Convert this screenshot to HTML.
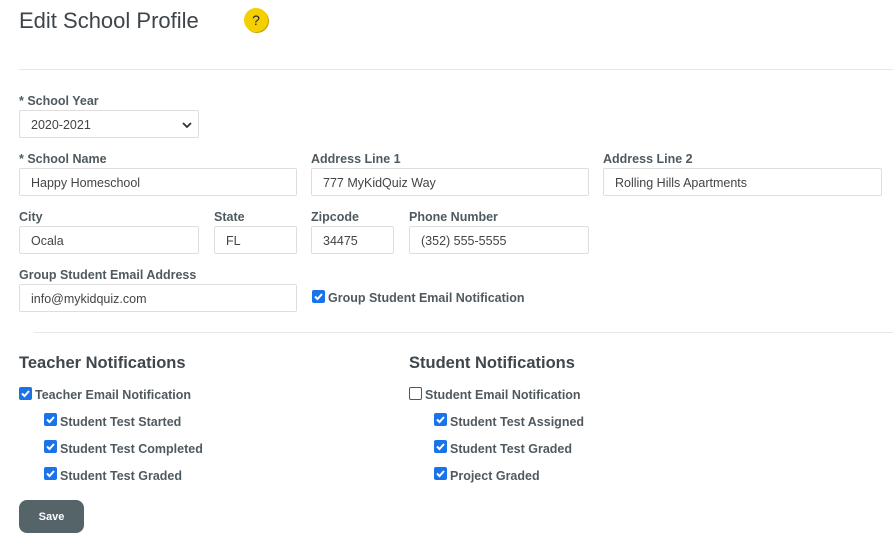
<!DOCTYPE html>
<html><head><style>
body{margin:0;width:893px;height:556px;background:#fff;font-family:"Liberation Sans",sans-serif;color:#4a5258;position:relative;overflow:hidden}
.a{position:absolute;white-space:nowrap}
.l{font-size:12.5px;font-weight:bold;color:#4f5a60}
.i{position:absolute;box-sizing:border-box;border:1px solid #dedede;border-radius:2px;height:28px;font-size:12.5px;color:#444;padding:0 0 0 11px;line-height:28px}
.cb{position:absolute;width:13px;height:13px;border-radius:2px;background:#1a73e8;box-sizing:border-box}
.cb svg{position:absolute;left:1px;top:1px}
.cb.u{background:#fff;border:1px solid #555}
.t{font-size:12.5px;font-weight:bold;color:#4f5a60}
h2{margin:0;font-size:16.5px;font-weight:bold;color:#3f474c}
</style></head><body>
<div class="a" style="left:19px;top:8px;font-size:22px;color:#3d454a">Edit School Profile</div>
<div class="a" style="left:244px;top:8px;width:24px;height:24px;border-radius:50%;background:#f5d000;box-shadow:1px 1px 0 #c9a400;text-align:center;font-size:14px;line-height:24px;color:#222">?</div>
<div class="a" style="left:19px;top:69px;width:874px;height:1px;background:#e8e8e8"></div>

<div class="a l" style="left:19px;top:94px">* School Year</div>
<div class="i" style="left:19px;top:110px;width:180px">2020-2021<svg style="position:absolute;right:6px;top:10px" width="10" height="8"><path d="M1 2l4 4 4-4" fill="none" stroke="#333" stroke-width="1.8"/></svg></div>

<div class="a l" style="left:19px;top:152px">* School Name</div>
<div class="a l" style="left:311px;top:152px">Address Line 1</div>
<div class="a l" style="left:603px;top:152px">Address Line 2</div>
<div class="i" style="left:19px;top:168px;width:278px">Happy Homeschool</div>
<div class="i" style="left:311px;top:168px;width:278px">777 MyKidQuiz Way</div>
<div class="i" style="left:603px;top:168px;width:279px">Rolling Hills Apartments</div>

<div class="a l" style="left:19px;top:210px">City</div>
<div class="a l" style="left:214px;top:210px">State</div>
<div class="a l" style="left:311px;top:210px">Zipcode</div>
<div class="a l" style="left:409px;top:210px">Phone Number</div>
<div class="i" style="left:19px;top:226px;width:180px">Ocala</div>
<div class="i" style="left:214px;top:226px;width:83px">FL</div>
<div class="i" style="left:311px;top:226px;width:83px">34475</div>
<div class="i" style="left:409px;top:226px;width:180px">(352) 555-5555</div>

<div class="a l" style="left:19px;top:268px">Group Student Email Address</div>
<div class="i" style="left:19px;top:284px;width:278px">info@mykidquiz.com</div>
<div class="cb" style="left:312px;top:290px"><svg width="11" height="11"><path d="M2 5.5l2.5 2.5 4.5-5" fill="none" stroke="#fff" stroke-width="2"/></svg></div>
<div class="a t" style="left:328px;top:291px">Group Student Email Notification</div>

<div class="a" style="left:34px;top:332px;width:859px;height:1px;background:#e8e8e8"></div>

<h2 class="a" style="left:19px;top:354px">Teacher Notifications</h2>
<h2 class="a" style="left:409px;top:354px">Student Notifications</h2>

<div class="cb" style="left:19px;top:387px"><svg width="11" height="11"><path d="M2 5.5l2.5 2.5 4.5-5" fill="none" stroke="#fff" stroke-width="2"/></svg></div>
<div class="a t" style="left:35px;top:388px">Teacher Email Notification</div>
<div class="cb" style="left:44px;top:413px"><svg width="11" height="11"><path d="M2 5.5l2.5 2.5 4.5-5" fill="none" stroke="#fff" stroke-width="2"/></svg></div>
<div class="a t" style="left:60px;top:415px">Student Test Started</div>
<div class="cb" style="left:44px;top:440px"><svg width="11" height="11"><path d="M2 5.5l2.5 2.5 4.5-5" fill="none" stroke="#fff" stroke-width="2"/></svg></div>
<div class="a t" style="left:60px;top:442px">Student Test Completed</div>
<div class="cb" style="left:44px;top:467px"><svg width="11" height="11"><path d="M2 5.5l2.5 2.5 4.5-5" fill="none" stroke="#fff" stroke-width="2"/></svg></div>
<div class="a t" style="left:60px;top:469px">Student Test Graded</div>

<div class="cb u" style="left:409px;top:387px"></div>
<div class="a t" style="left:425px;top:388px">Student Email Notification</div>
<div class="cb" style="left:434px;top:413px"><svg width="11" height="11"><path d="M2 5.5l2.5 2.5 4.5-5" fill="none" stroke="#fff" stroke-width="2"/></svg></div>
<div class="a t" style="left:450px;top:415px">Student Test Assigned</div>
<div class="cb" style="left:434px;top:440px"><svg width="11" height="11"><path d="M2 5.5l2.5 2.5 4.5-5" fill="none" stroke="#fff" stroke-width="2"/></svg></div>
<div class="a t" style="left:450px;top:442px">Student Test Graded</div>
<div class="cb" style="left:434px;top:467px"><svg width="11" height="11"><path d="M2 5.5l2.5 2.5 4.5-5" fill="none" stroke="#fff" stroke-width="2"/></svg></div>
<div class="a t" style="left:450px;top:469px">Project Graded</div>

<div class="a" style="left:19px;top:500px;width:65px;height:33px;border-radius:8px;background:#546468;color:#fff;font-size:11px;font-weight:bold;text-align:center;line-height:35px">Save</div>
</body></html>
